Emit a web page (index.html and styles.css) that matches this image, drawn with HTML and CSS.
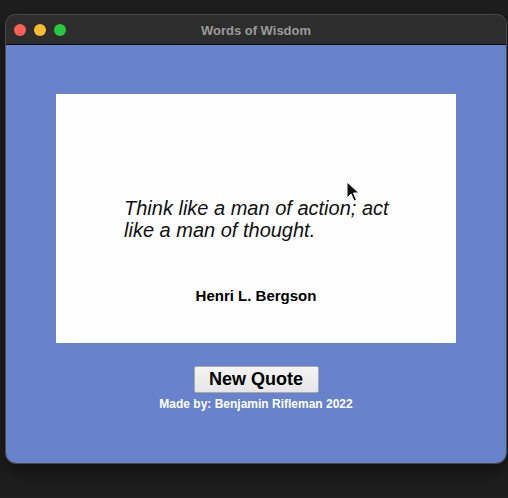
FILE: index.html
```html
<!DOCTYPE html>
<html>
<head>
<meta charset="utf-8">
<link rel="stylesheet" href="styles.css">
</head>
<body>
<div class="window">
  <div class="titlebar">
    <div class="lights">
      <span class="light red"></span>
      <span class="light yellow"></span>
      <span class="light green"></span>
    </div>
    <div class="title">Words of Wisdom</div>
  </div>
  <div class="content">
    <div class="card">
      <p class="quote">Think like a man of action; act like a man of thought.</p>
      <p class="author">Henri L. Bergson</p>
      <svg class="cursor" width="14" height="22" viewBox="0 0 14 22"><path d="M1 1 L1 17 L5 13 L8 20 L10.5 19 L7.5 12 L13 12 Z" fill="#111" stroke="#fff" stroke-width="1"/></svg>
    </div>
    <button class="btn">New Quote</button>
    <div class="credit">Made by: Benjamin Rifleman 2022</div>
  </div>
</div>
</body>
</html>
```
FILE: styles.css
```css
html, body {
  margin: 0;
  padding: 0;
}
body {
  width: 508px;
  height: 498px;
  background: #1e1e1e;
  font-family: "Liberation Sans", Arial, sans-serif;
  padding: 15px 0 0 6px;
  box-sizing: border-box;
}
.window {
  width: 500px;
  height: 448px;
  border-radius: 10px;
  overflow: hidden;
  display: flex;
  flex-direction: column;
  box-shadow: 0 0 0 1px #4a4a4a, 0 8px 20px rgba(0,0,0,0.5);
}
.titlebar {
  height: 29px;
  background: #2d2d2d;
  border-bottom: 1px solid #0c0c0c;
  position: relative;
  display: flex;
  align-items: center;
  justify-content: center;
  flex-shrink: 0;
}
.lights {
  position: absolute;
  left: 8px;
  top: 9px;
  display: flex;
  gap: 8px;
}
.light {
  width: 12px;
  height: 12px;
  border-radius: 50%;
}
.red { background: #fe5f57; }
.yellow { background: #febc2e; }
.green { background: #28c840; }
.title {
  color: #9a9a9a;
  font-weight: bold;
  font-size: 13px;
  margin-top: 1px;
}
.content {
  flex: 1;
  background: #6883cb;
  display: flex;
  flex-direction: column;
  align-items: center;
  padding-top: 49px;
}
.card {
  width: 400px;
  height: 249px;
  background: #fefefe;
  position: relative;
  box-sizing: border-box;
  padding: 103px 0 0 68px;
}
.quote {
  margin: 0;
  width: 290px;
  font-style: italic;
  font-size: 20px;
  line-height: 22px;
  color: #111;
}
.author {
  margin: 46px 0 0 -68px;
  text-align: center;
  width: 400px;
  font-weight: bold;
  font-size: 15px;
  color: #000;
}
.cursor {
  position: absolute;
  left: 290px;
  top: 87px;
}
.btn {
  margin-top: 23px;
  width: 125px;
  height: 27px;
  background: linear-gradient(#f4f4f4, #e6e6e6);
  border: 1px solid #a8a8a8;
  border-radius: 2px;
  font-family: "Liberation Sans", Arial, sans-serif;
  font-weight: bold;
  font-size: 18px;
  color: #000;
  padding: 0;
}
.credit {
  margin-top: 4px;
  color: #fff;
  font-weight: bold;
  font-size: 12px;
}
```
